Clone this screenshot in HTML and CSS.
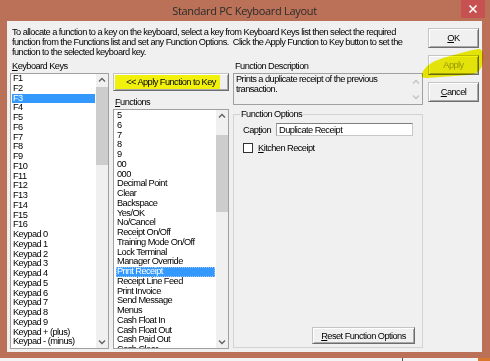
FILE: index.html
```html
<!DOCTYPE html>
<html>
  <head>
    <title>Standard PC Keyboard Layout</title>
    <link rel="stylesheet" href="styles.css">
  </head>
  <body>
    <div class="screen">
      <div class="window">
        <div class="titlebar">
          <span class="title">Standard PC Keyboard Layout</span>
          <span class="close">
            <svg width="10" height="10" viewBox="0 0 10 10"><path d="M1.5 1.5 L8.5 8.5 M8.5 1.5 L1.5 8.5" stroke="#fff" stroke-width="1.6"/></svg>
          </span>
        </div>

        <div class="client">
          <div class="main">
            <p class="intro">To allocate a function to a key on the keyboard, select a key from Keyboard Keys list then select the required<br>function from the Functions list and set any Function Options.&nbsp; Click the Apply Function to Key button to set the<br>function to the selected keyboard key.</p>

            <div class="panels">
              <!-- Keyboard keys -->
              <div class="col keys">
                <div class="label"><u>K</u>eyboard Keys</div>
                <div class="listbox">
                  <ul class="items">
                    <li>F1</li>
                    <li>F2</li>
                    <li class="selected">F3</li>
                    <li>F4</li>
                    <li>F5</li>
                    <li>F6</li>
                    <li>F7</li>
                    <li>F8</li>
                    <li>F9</li>
                    <li>F10</li>
                    <li>F11</li>
                    <li>F12</li>
                    <li>F13</li>
                    <li>F14</li>
                    <li>F15</li>
                    <li>F16</li>
                    <li>Keypad 0</li>
                    <li>Keypad 1</li>
                    <li>Keypad 2</li>
                    <li>Keypad 3</li>
                    <li>Keypad 4</li>
                    <li>Keypad 5</li>
                    <li>Keypad 6</li>
                    <li>Keypad 7</li>
                    <li>Keypad 8</li>
                    <li>Keypad 9</li>
                    <li>Keypad + (plus)</li>
                    <li>Keypad - (minus)</li>
                  </ul>
                  <div class="scrollbar">
                    <div class="arrow"><svg width="12" height="12" viewBox="0 0 12 12"><polyline points="3,7.5 6,4.5 9,7.5" /></svg></div>
                    <div class="track"><div class="thumb keys-thumb"></div></div>
                    <div class="arrow"><svg width="12" height="12" viewBox="0 0 12 12"><polyline points="3,4.5 6,7.5 9,4.5" /></svg></div>
                  </div>
                </div>
              </div>

              <!-- Functions -->
              <div class="col funcs">
                <button class="btn apply-key">&lt;&lt; Apply Function to Key</button>
                <div class="label"><u>F</u>unctions</div>
                <div class="listbox">
                  <ul class="items">
                    <li>5</li>
                    <li>6</li>
                    <li>7</li>
                    <li>8</li>
                    <li>9</li>
                    <li>00</li>
                    <li>000</li>
                    <li>Decimal Point</li>
                    <li>Clear</li>
                    <li>Backspace</li>
                    <li>Yes/OK</li>
                    <li>No/Cancel</li>
                    <li>Receipt On/Off</li>
                    <li>Training Mode On/Off</li>
                    <li>Lock Terminal</li>
                    <li>Manager Override</li>
                    <li class="selected focused">Print Receipt</li>
                    <li>Receipt Line Feed</li>
                    <li>Print Invoice</li>
                    <li>Send Message</li>
                    <li>Menus</li>
                    <li>Cash Float In</li>
                    <li>Cash Float Out</li>
                    <li>Cash Paid Out</li>
                    <li>Cash Clear</li>
                  </ul>
                  <div class="scrollbar">
                    <div class="arrow"><svg width="12" height="12" viewBox="0 0 12 12"><polyline points="3,7.5 6,4.5 9,7.5" /></svg></div>
                    <div class="track"><div class="thumb funcs-thumb"></div></div>
                    <div class="arrow"><svg width="12" height="12" viewBox="0 0 12 12"><polyline points="3,4.5 6,7.5 9,4.5" /></svg></div>
                  </div>
                </div>
              </div>

              <!-- Description and options -->
              <div class="col details">
                <div class="label">Function Description</div>
                <div class="desc">
                  <div class="desc-text">Prints a duplicate receipt of the previous<br>transaction.</div>
                  <div class="scrollbar disabled">
                    <div class="arrow"><svg width="12" height="12" viewBox="0 0 12 12"><polyline points="3,7.5 6,4.5 9,7.5" /></svg></div>
                    <div class="track"></div>
                    <div class="arrow"><svg width="12" height="12" viewBox="0 0 12 12"><polyline points="3,4.5 6,7.5 9,4.5" /></svg></div>
                  </div>
                </div>

                <fieldset class="options">
                  <legend>Function Options</legend>
                  <div class="caption-row">
                    <label for="caption">Cap<u>t</u>ion</label>
                    <input type="text" id="caption" value="Duplicate Receipt">
                  </div>
                  <div class="check-row">
                    <span class="checkbox"></span>
                    <span><u>K</u>itchen Receipt</span>
                  </div>
                  <button class="btn reset"><u>R</u>eset Function Options</button>
                </fieldset>
              </div>
            </div>
          </div>

          <div class="buttons">
            <button class="btn"><u>O</u>K</button>
            <button class="btn" disabled>Apply</button>
            <button class="btn"><u>C</u>ancel</button>
          </div>
        </div>
      </div>

      <div class="strip">
        <span class="strip-a"></span>
        <span class="strip-line"></span>
        <span class="strip-b"></span>
        <span class="strip-c"></span>
      </div>

      <!-- highlighter mark over the Apply button -->
      <svg class="marker" width="490" height="361" viewBox="0 0 490 361">
        <path d="M422,74 C424,66 434,60 450,56 C461,53 471,50 479,49 C483,49 484,55 483,61 C482,70 478,74 468,75 C455,76 440,77 427,78 C423,78 421,77 422,74 Z" fill="#f2f20a"/>
      </svg>
    </div>
  </body>
</html>
```

FILE: styles.css
```css
/* Page */
body {
  margin: 0;
  font-family: "Liberation Sans", Arial, sans-serif;
  font-size: 9.25px;
  letter-spacing: -0.55px;
  color: #000;
}

.screen {
  position: relative;
  width: 490px;
  height: 361px;
  overflow: hidden;
  background: #f3f3f3;
}

/* Window frame */
.window {
  width: 490px;
  height: 358px;
  box-sizing: border-box;
  padding: 0 8px 6px 7px;
  background: #ba7158;
  display: flex;
  flex-direction: column;
}

.titlebar {
  height: 21px;
  flex-shrink: 0;
  display: grid;
  grid-template-columns: 1fr auto 1fr;
  align-items: start;
}

.title {
  grid-column: 2;
  font-family: "Open Sans", sans-serif;
  font-size: 11px;
  letter-spacing: -0.3px;
  line-height: 22px;
  color: #2b2b2b;
}

.close {
  grid-column: 3;
  justify-self: end;
  margin-right: -3px;
  width: 24px;
  height: 18px;
  background: #c75050;
  display: flex;
  align-items: center;
  justify-content: center;
}

/* Client area */
.client {
  flex: 1;
  min-height: 0;
  background: #f0f0f0;
  display: flex;
  padding: 6px 3px 3px 3px;
}

.main {
  width: 413px;
  min-height: 0;
  display: flex;
  flex-direction: column;
}

.intro {
  margin: 0 0 4px 2px;
  line-height: 10px;
  white-space: nowrap;
}

.panels {
  flex: 1;
  min-height: 0;
  display: flex;
  gap: 4px;
}

.col {
  min-height: 0;
  display: flex;
  flex-direction: column;
}

.keys { width: 99px; }
.funcs { width: 116px; }
.details { width: 190px; }

.label {
  height: 10px;
  line-height: 10px;
  margin-bottom: 2px;
  padding-left: 2px;
}

/* List boxes */
.listbox {
  flex: 1;
  min-height: 0;
  display: flex;
  border: 1px solid #a0a0a0;
  background: #fff;
  overflow: hidden;
}

.items {
  flex: 1;
  list-style: none;
  margin: 0;
  padding: 0 1px;
  overflow: hidden;
}

.funcs .items {
  padding: 1px 1px 0 2px;
}

.items li {
  height: 9.75px;
  line-height: 9.75px;
  padding-left: 1px;
  white-space: nowrap;
}

.items li.selected {
  background: #3399ff;
  color: #fff;
}

.items li.focused {
  outline: 1px dotted #9cc6f0;
  outline-offset: -1px;
}

/* Scrollbars */
.scrollbar {
  width: 12px;
  display: flex;
  flex-direction: column;
  background: #f0f0f0;
}

.arrow {
  height: 12px;
  display: flex;
  align-items: center;
  justify-content: center;
}

.arrow polyline {
  fill: none;
  stroke: #606060;
  stroke-width: 1.3;
}

.scrollbar.disabled .arrow polyline {
  stroke: #c2c2c2;
}

.track {
  flex: 1;
}

.thumb {
  background: #cdcdcd;
}

.keys-thumb {
  margin-top: 1px;
  height: 78px;
}

.funcs-thumb {
  margin-top: 13px;
  height: 77px;
}

/* Buttons */
.btn {
  font: inherit;
  letter-spacing: inherit;
  color: #000;
  background: #f0f0f0;
  border: 1px solid;
  border-color: #c4c4c4 #6d6d6d #6d6d6d #c4c4c4;
  box-shadow: inset 1px 1px #fff, inset -1px -1px #a8a8a8;
  padding: 0;
  cursor: pointer;
}

.btn:disabled {
  color: #a0a0a0;
}

.apply-key {
  margin-top: 12px;
  height: 18px;
  background: linear-gradient(to right, #f1f10c 0, #f1f10c 106px, #f0f0f0 106px);
}

.funcs .label {
  margin-top: 6px;
}

.buttons {
  width: 51px;
  margin-left: 5px;
  padding-top: 1px;
  display: flex;
  flex-direction: column;
  gap: 7px;
}

.buttons .btn {
  height: 20px;
}

/* Description */
.desc {
  height: 32px;
  flex-shrink: 0;
  box-sizing: border-box;
  border: 1px solid #a0a0a0;
  background: #f0f0f0;
  display: flex;
}

.desc-text {
  flex: 1;
  padding: 1px 2px;
  line-height: 9.5px;
}

.desc .arrow {
  height: 15px;
}

/* Function options group */
.options {
  flex: 1;
  min-width: 0;
  min-height: 0;
  margin: 4px 0 1px;
  border: 1px solid #d3d3d3;
  padding: 4px 7px 3px 9px;
  display: flex;
  flex-direction: column;
}

.options legend {
  margin-left: -3px;
  padding: 0 1px;
  line-height: 10px;
}

.caption-row {
  display: flex;
  align-items: center;
}

.caption-row label {
  width: 33px;
}

.caption-row input {
  width: 137px;
  height: 13px;
  box-sizing: border-box;
  border: 1px solid;
  border-color: #7f7f7f #c8c8c8 #c8c8c8 #a0a0a0;
  padding: 0 2px;
  font: inherit;
  letter-spacing: inherit;
}

.check-row {
  margin-top: 7px;
  display: flex;
  align-items: center;
  gap: 5px;
}

.checkbox {
  width: 10px;
  height: 10px;
  box-sizing: border-box;
  border: 1px solid #333;
  background: #fff;
}

.reset {
  margin-top: auto;
  align-self: flex-end;
  width: 103px;
  height: 17px;
}

/* Strip of desktop below the window */
.strip {
  height: 3px;
  display: flex;
}

.strip-a { width: 402px; background: #f4f4f4; }
.strip-line { width: 1px; background: #555; }
.strip-b { width: 75px; background: #f4f4f4; }
.strip-c { flex: 1; background: #d9772f; }

/* Highlighter mark */
.marker {
  position: absolute;
  left: 0;
  top: 0;
  pointer-events: none;
  mix-blend-mode: multiply;
}
```
